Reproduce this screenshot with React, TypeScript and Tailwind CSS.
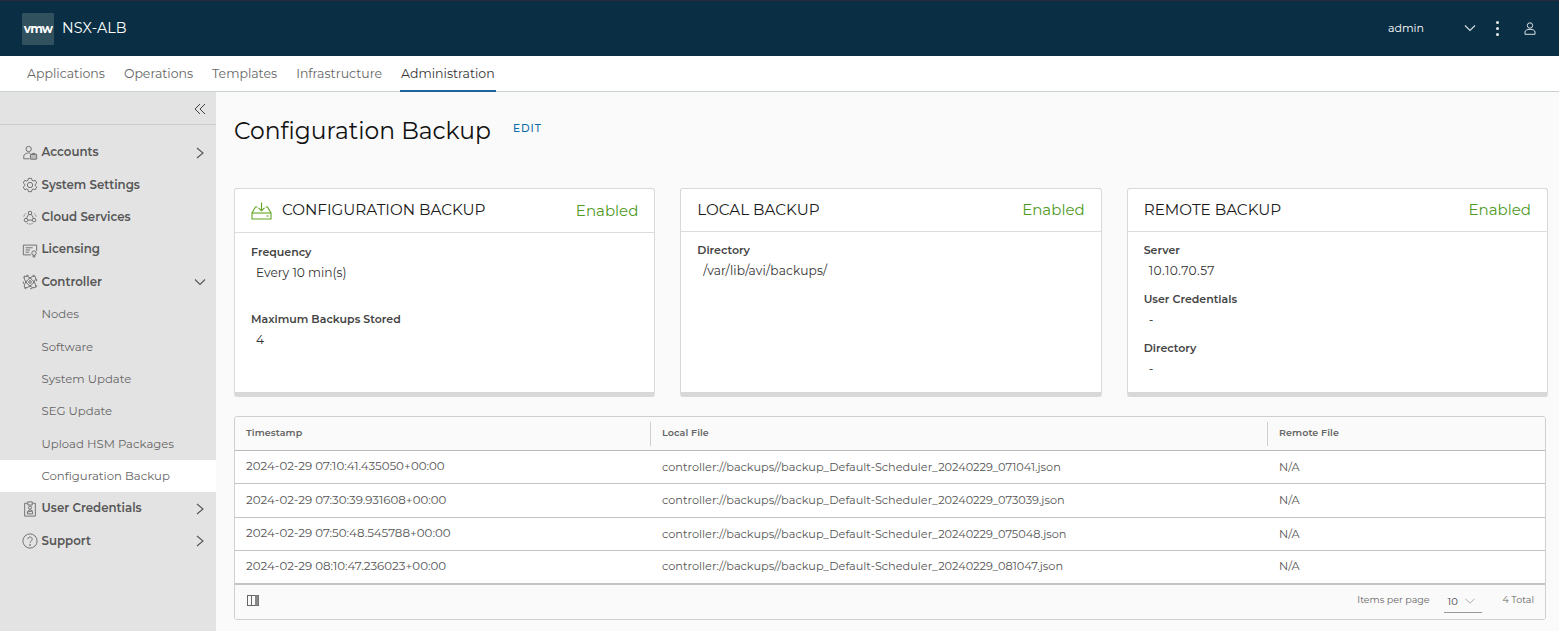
import React from "react";

const S = ({ children, size = 16, cls = "text-[#666]" }: { children: React.ReactNode; size?: number; cls?: string }) => (
  <svg width={size} height={size} viewBox="0 0 36 36" fill="none" stroke="currentColor" strokeWidth={2} className={`shrink-0 ${cls}`}>
    {children}
  </svg>
);

const ChevR = () => (
  <svg width="10" height="12" viewBox="0 0 10 12" fill="none" stroke="#555" strokeWidth="1.1" className="shrink-0"><path d="M2 1l6 5-6 5" /></svg>
);
const ChevD = ({ color = "#555" }: { color?: string }) => (
  <svg width="12" height="8" viewBox="0 0 12 8" fill="none" stroke={color} strokeWidth="1.1" className="shrink-0"><path d="M1 1.5l5 5 5-5" /></svg>
);

const icons: Record<string, React.ReactNode> = {
  accounts: (
    <S>
      <circle cx="15" cy="9" r="6" />
      <path d="M4 31v-6c0-4 5-7 11-7 2 0 3 0 4 .5" />
      <path d="M4 31h13" />
      <rect x="19" y="21" width="14" height="11" rx="1" fill="#bbb" />
      <path d="M23 21v-2h6v2" />
    </S>
  ),
  settings: (
    <S>
      <circle cx="18" cy="18" r="6" />
      <path d="M14.5 3h7l1 4.5 3 1.5 4.3-1.6 3.4 6-3.4 3v3.2l3.4 3-3.4 6-4.3-1.6-3 1.5-1 4.5h-7l-1-4.5-3-1.5-4.3 1.6-3.4-6 3.4-3v-3.2l-3.4-3 3.4-6 4.3 1.6 3-1.5z" />
    </S>
  ),
  cloud: (
    <S>
      <circle cx="18" cy="9" r="4" />
      <circle cx="9" cy="25" r="4" />
      <circle cx="27" cy="25" r="4" />
      <path d="M15 12l-5 9M21 12l5 9M13 25h10" />
      <path d="M8 10a14 14 0 0 0-4 8M28 10a14 14 0 0 1 4 8M11 32a14 14 0 0 0 14 0" strokeDasharray="3 2" />
    </S>
  ),
  licensing: (
    <S>
      <path d="M20 29H3V7h30v13" />
      <path d="M8 13h16M8 18h10M8 23h8" />
      <circle cx="27" cy="25" r="5" />
      <path d="M25 30v4l2-1 2 1v-4" />
    </S>
  ),
  controller: (
    <S>
      <ellipse cx="18" cy="18" rx="17" ry="7" transform="rotate(45 18 18)" />
      <ellipse cx="18" cy="18" rx="17" ry="7" transform="rotate(-45 18 18)" />
      <circle cx="18" cy="18" r="3" />
      <rect x="3" y="3" width="30" height="30" rx="7" strokeDasharray="5 9" />
    </S>
  ),
  creds: (
    <S>
      <path d="M12 5H6v29h24V5h-6" />
      <path d="M13 2h10v7H13z" />
      <circle cx="18" cy="15" r="3.5" />
      <path d="M12 29c0-6 3-9 6-9s6 3 6 9zM12 25l12-3" />
    </S>
  ),
  support: (
    <S>
      <circle cx="18" cy="18" r="16" />
      <path d="M13 14c0-3 2-5 5-5s5 2 5 5c0 4-5 4-5 8" />
      <circle cx="18" cy="27" r="1" fill="currentColor" />
    </S>
  ),
};

const NavRow = ({ icon, label, chev }: { icon: string; label: string; chev?: "r" | "d" }) => (
  <div className="h-[32.36px] flex items-center pl-[22px] pr-[11px] shrink-0">
    <span className="w-[16px] flex justify-center">{icons[icon]}</span>
    <span className="ml-[3.5px] text-[11.8px] font-semibold text-[#565656] flex-1 pt-[1px]">{label}</span>
    {chev === "r" && <ChevR />}
    {chev === "d" && <span className="-mr-[1px]"><ChevD /></span>}
  </div>
);

const SubRow = ({ label, active }: { label: string; active?: boolean }) => (
  <div className={`h-[32.36px] flex items-center pl-[41.5px] pt-[1px] text-[11.7px] text-[#666] shrink-0 ${active ? "bg-white" : ""}`}>{label}</div>
);

const Field = ({ label, value, cls = "", valueCls = "" }: { label: string; value: string; cls?: string; valueCls?: string }) => (
  <div className={cls}>
    <div className="text-[11px] leading-[14px] font-semibold text-[#444]">{label}</div>
    <div className={`text-[12.2px] leading-[14px] text-[#333] mt-[7px] pl-[5px] ${valueCls}`}>{value}</div>
  </div>
);

const Card = ({ title, icon, hh, children }: { title: string; icon?: boolean; hh: number; children: React.ReactNode }) => (
  <div className="h-[208.5px] bg-white border border-[#d9d9d9] border-b-[5px] border-b-[#d8d8d8] rounded-[3px] flex flex-col">
    <div
      className={`flex items-center shrink-0 border-b border-[#dcdcdc] pl-[16px] pr-[16px] ${hh === 44 ? "h-[44px]" : "h-[43px]"}`}
    >
      {icon && (
        <svg width="21" height="18" viewBox="0 0 21 18" fill="none" stroke="#62a420" strokeWidth="1.1" className="mr-[10px] shrink-0">
          <path d="M10.5 0.5v8M7.5 5.8l3 3 3-3" />
          <path d="M6.5 5H4.5L1 11v6h19v-6l-3.5-6h-2" />
          <path d="M1 11h19" />
          <path d="M15.5 14h2" />
        </svg>
      )}
      <span className="text-[15.2px] text-[#1a1a1a] flex-1">{title}</span>
      <span className={`text-[15px] text-[#4f9a1f] ${icon ? "pt-[2px]" : ""}`}>Enabled</span>
    </div>
    <div className="px-[16px]">{children}</div>
  </div>
);

const rows = [
  ["2024-02-29 07:10:41.435050+00:00", "controller://backups//backup_Default-Scheduler_20240229_071041.json"],
  ["2024-02-29 07:30:39.931608+00:00", "controller://backups//backup_Default-Scheduler_20240229_073039.json"],
  ["2024-02-29 07:50:48.545788+00:00", "controller://backups//backup_Default-Scheduler_20240229_075048.json"],
  ["2024-02-29 08:10:47.236023+00:00", "controller://backups//backup_Default-Scheduler_20240229_081047.json"],
];

const cols = "grid grid-cols-[415px_617px_1fr]";

export default function App() {
  return (
    <div className="w-[1559px] h-[631px] overflow-hidden flex flex-col bg-[#fafafa]" style={{ fontFamily: '"Montserrat", Inter, "Liberation Sans", sans-serif' }}>
      <header className="h-[56px] shrink-0 bg-[#0a2f44] border-t border-t-[#2a2b3a] flex items-center pl-[22px] text-white">
        <div className="w-[32px] h-[32px] bg-[#31515f] rounded-[1px] flex items-center justify-center text-[12px] font-bold tracking-[-0.8px]">vmw</div>
        <div className="ml-[8px] text-[14.3px] tracking-[0.1px]">NSX-ALB</div>
        <div className="ml-auto flex items-center">
          <span className="text-[11px] mr-[40px] relative top-[-0.5px]">admin</span>
          <span className="relative top-[-1px]"><ChevD color="#d8dfe3" /></span>
          <div className="ml-[20px] flex flex-col gap-[3px] items-center w-[3px]">
            <i className="w-[3px] h-[3px] rounded-full bg-[#e8ecef]" />
            <i className="w-[3px] h-[3px] rounded-full bg-[#e8ecef]" />
            <i className="w-[3px] h-[3px] rounded-full bg-[#e8ecef]" />
          </div>
          <svg width="12" height="13" viewBox="0 0 12 13" fill="none" stroke="#d8dfe3" strokeWidth="1" className="ml-[25px] mr-[23px]">
            <circle cx="6" cy="3.5" r="2.7" />
            <path d="M1 12.3V10c0-1.6 2-2.7 5-2.7s5 1.1 5 2.7v2.3z" />
          </svg>
        </div>
      </header>

      <nav className="h-[36px] shrink-0 bg-white border-b border-[#c9d0d2] flex pl-[27px] text-[12.5px] text-[#666] gap-[19px]">
        {["Applications", "Operations", "Templates", "Infrastructure"].map((t) => (
          <div key={t} className="pt-[9px]">{t}</div>
        ))}
        <div className="pt-[9px] px-[1px] -mx-[1px] text-[#333] border-b-2 border-[#1a6398] h-[36px]">Administration</div>
      </nav>

      <div className="flex flex-1 min-h-0">
        <aside className="w-[216px] shrink-0 bg-[#e3e3e3] flex flex-col">
          <div className="h-[33px] shrink-0 border-b border-[#c9cccc] flex items-center justify-end pr-[10px] pt-[1px]">
            <svg width="12" height="12" viewBox="0 0 12 12" fill="none" stroke="#444" strokeWidth="1"><path d="M6 1L1 6l5 5M11 1L6 6l5 5" /></svg>
          </div>
          <div className="pt-[11.5px] flex flex-col">
            <NavRow icon="accounts" label="Accounts" chev="r" />
            <NavRow icon="settings" label="System Settings" />
            <NavRow icon="cloud" label="Cloud Services" />
            <NavRow icon="licensing" label="Licensing" />
            <NavRow icon="controller" label="Controller" chev="d" />
            <SubRow label="Nodes" />
            <SubRow label="Software" />
            <SubRow label="System Update" />
            <SubRow label="SEG Update" />
            <SubRow label="Upload HSM Packages" />
            <SubRow label="Configuration Backup" active />
            <NavRow icon="creds" label="User Credentials" chev="r" />
            <NavRow icon="support" label="Support" chev="r" />
          </div>
        </aside>

        <main className="flex-1 min-w-0 pl-[18px] pr-[11px] flex flex-col">
          <div className="h-[96px] shrink-0 flex items-start pt-[24px]">
            <h1 className="text-[23.4px] leading-[30px] text-[#111]">Configuration Backup</h1>
            <span className="ml-[22px] mt-[6px] text-[10.5px] leading-[14px] tracking-[1px] text-[#0f6ba8] font-medium">EDIT</span>
          </div>

          <div className="grid grid-cols-3 gap-[25px] shrink-0">
            <Card title="CONFIGURATION BACKUP" icon hh={44}>
              <Field cls="mt-[12px]" label="Frequency" value="Every 10 min(s)" />
              <Field cls="mt-[32px]" label="Maximum Backups Stored" value="4" />
            </Card>
            <Card title="LOCAL BACKUP" hh={43}>
              <Field cls="mt-[11px]" label="Directory" value="/var/lib/avi/backups/" valueCls="tracking-[0.15px] pl-[6px]" />
            </Card>
            <Card title="REMOTE BACKUP" hh={43}>
              <Field cls="mt-[11px]" label="Server" value="10.10.70.57" valueCls="tracking-[0.5px]" />
              <Field cls="mt-[14px]" label="User Credentials" value="-" />
              <Field cls="mt-[14px]" label="Directory" value="-" />
            </Card>
          </div>

          <div className="mt-[19.5px] mr-[2px] shrink-0 border border-[#cfcfcf] rounded-[3px] bg-white overflow-hidden">
            <div className={`${cols} h-[34px] bg-[#fafafa] border-b border-[#b9b9b9] text-[9.5px] font-semibold text-[#666] tracking-[0.1px]`}>
              {["Timestamp", "Local File", "Remote File"].map((h, i) => (
                <div key={h} className="flex items-center pl-[11px]">
                  <span className={i > 0 ? "pl-[11px] -ml-[11px] border-l border-[#cfcfcf] h-[24px] flex items-center" : ""}>{h}</span>
                </div>
              ))}
            </div>
            {rows.map((r, i) => (
              <div key={r[0]} className={`${cols} h-[33.4px] border-b border-[#c4c4c4] text-[#555] ${i === 3 ? "border-b-2 border-b-[#c4c4c4]" : ""}`}>
                <div className="flex items-center pl-[11px] text-[11.8px]">{r[0]}</div>
                <div className="flex items-center pl-[12px] text-[11.3px]">{r[1]}</div>
                <div className="flex items-center pl-[12px] text-[11.3px]">N/A</div>
              </div>
            ))}
            <div className="h-[34px] bg-[#fafafa] flex items-center pl-[12px] pr-[11px] pb-[2px] text-[#666]">
              <svg width="12" height="11" viewBox="0 0 12 11" className="shrink-0">
                <rect x="0.5" y="0.5" width="11" height="10" fill="none" stroke="#666" />
                <path d="M4.5 0.5v10" stroke="#666" />
                <rect x="8" y="0.5" width="3.5" height="10" fill="#888" />
              </svg>
              <span className="ml-auto text-[9.5px]">Items per page</span>
              <span className="ml-[14px] w-[38px] h-[24px] border-b border-[#999] flex items-center pl-[4px] text-[10px] text-[#444] pt-[2px]">
                10
                <span className="ml-[6px] scale-90"><ChevD color="#aaa" /></span>
              </span>
              <span className="ml-[21px] text-[9.5px]">4 Total</span>
            </div>
          </div>
        </main>
      </div>
    </div>
  );
}
